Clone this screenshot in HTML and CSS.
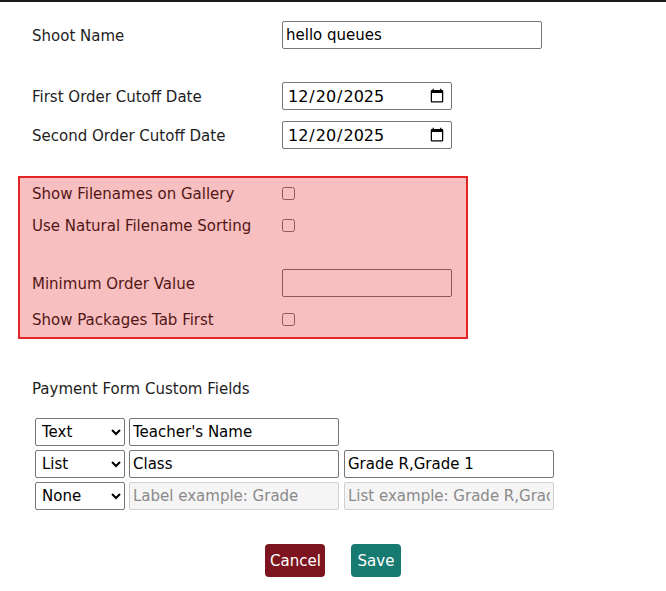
FILE: index.html
```html
<!DOCTYPE html>
<html lang="en">
<head>
	<meta charset="UTF-8">
	<title>Shoot Settings</title>
	<link rel="stylesheet" href="styles.css">
</head>
<body>
	<div class="topline"></div>
	<form class="shootForm" action="">
		<div class="row first">
			<label class="lbl" for="shootName">Shoot Name</label>
			<input type="text" id="shootName" class="f-text wide" value="hello queues">
		</div>

		<div class="row gapBig">
			<label class="lbl" for="cutoff1">First Order Cutoff Date</label>
			<input type="date" id="cutoff1" class="f-date" value="2025-12-20">
		</div>
		<div class="row gapSmall">
			<label class="lbl" for="cutoff2">Second Order Cutoff Date</label>
			<input type="date" id="cutoff2" class="f-date" value="2025-12-20">
		</div>

		<!-- highlighted options -->
		<div class="highlight">
			<div class="row">
				<label class="lbl" for="showNames">Show Filenames on Gallery</label>
				<input type="checkbox" id="showNames" class="chk">
			</div>
			<div class="row hl2">
				<label class="lbl" for="natSort">Use Natural Filename Sorting</label>
				<input type="checkbox" id="natSort" class="chk">
			</div>
			<div class="row hl3">
				<label class="lbl" for="minOrder">Minimum Order Value</label>
				<input type="text" id="minOrder" class="f-text mid">
			</div>
			<div class="row hl4">
				<label class="lbl" for="pkgFirst">Show Packages Tab First</label>
				<input type="checkbox" id="pkgFirst" class="chk">
			</div>
		</div>

		<div class="row payTitle">
			<span class="lbl">Payment Form Custom Fields</span>
		</div>

		<div class="custom">
			<div class="cRow">
				<select class="f-sel">
					<option selected>Text</option>
					<option>List</option>
					<option>None</option>
				</select>
				<input type="text" class="f-text cIn" value="Teacher's Name">
			</div>
			<div class="cRow">
				<select class="f-sel">
					<option>Text</option>
					<option selected>List</option>
					<option>None</option>
				</select>
				<input type="text" class="f-text cIn" value="Class">
				<input type="text" class="f-text cIn last" value="Grade R,Grade 1">
			</div>
			<div class="cRow">
				<select class="f-sel">
					<option>Text</option>
					<option>List</option>
					<option selected>None</option>
				</select>
				<input type="text" class="f-text cIn" placeholder="Label example: Grade" disabled>
				<input type="text" class="f-text cIn last" placeholder="List example: Grade R,Grade 1" disabled>
			</div>
		</div>

		<div class="btns">
			<button type="button" class="btn cancel">Cancel</button>
			<button type="button" class="btn save">Save</button>
		</div>
	</form>
</body>
</html>
```

FILE: styles.css
```css
/*reset*/
*{
	margin: 0;
	padding: 0;
	box-sizing: border-box;
}
body{
	background-color: #fff;
	color: #1e1e1e;
	font-family: "DejaVu Sans", Verdana, sans-serif;
	font-size: 15px;
}
.topline{
	height: 2px;
	background-color: #1a1a1a;
}
/*form*/
.shootForm{
	padding: 0 32px;
}
.row{
	display: flex;
	align-items: center;
	height: 28px;
}
.lbl{
	width: 250px;
	flex-shrink: 0;
	padding-top: 2px;
}
.first{
	margin-top: 19px;
}
.gapBig{
	margin-top: 33px;
}
.gapSmall{
	margin-top: 11px;
}
/*inputs*/
.f-text,
.f-date,
.f-sel{
	height: 28px;
	border: 1px solid #767676;
	border-radius: 2px;
	background-color: #fff;
	color: #000;
	font-family: "DejaVu Sans", Verdana, sans-serif;
	font-size: 15px;
	padding: 0 3px;
}
.wide{
	width: 260px;
}
.mid{
	width: 170px;
}
.f-date{
	width: 170px;
	font-size: 16px;
	padding: 0 4px;
}
.chk{
	width: 13px;
	height: 13px;
	margin: 0;
}
/*highlight box*/
.highlight{
	position: relative;
	width: 436px;
	margin-top: 27px;
	padding: 3px 0 6px;
}
.highlight::after{
	content: "";
	position: absolute;
	top: 0;
	bottom: 0;
	left: -14px;
	right: 0;
	border: 2px solid #e42525;
	background-color: rgba(222, 0, 0, .25);
	pointer-events: none;
}
.hl2{
	margin-top: 4px;
}
.hl3{
	margin-top: 30px;
}
.hl4{
	margin-top: 8px;
}
/*custom fields*/
.payTitle{
	margin-top: 35px;
}
.custom{
	margin-top: 16px;
	padding-left: 3px;
}
.cRow{
	display: flex;
	gap: 4px;
	margin-bottom: 4px;
}
.cRow .last{
	margin-left: 1px;
}
.f-sel{
	width: 90px;
	padding: 0 2px;
}
.cIn{
	width: 210px;
}
.f-text:disabled{
	background-color: #f5f5f5;
	border-color: #d0d0d0;
}
.f-text::placeholder{
	color: #8a8a8a;
}
/*buttons*/
.btns{
	display: flex;
	justify-content: center;
	gap: 26px;
	margin-top: 34px;
}
.btn{
	height: 33px;
	padding: 0 5px;
	border: none;
	border-radius: 4px;
	color: #fff;
	font-family: "DejaVu Sans", Verdana, sans-serif;
	font-size: 15px;
}
.cancel{
	width: 60px;
	background-color: #7c1520;
}
.save{
	width: 50px;
	background-color: #187b72;
}
```
